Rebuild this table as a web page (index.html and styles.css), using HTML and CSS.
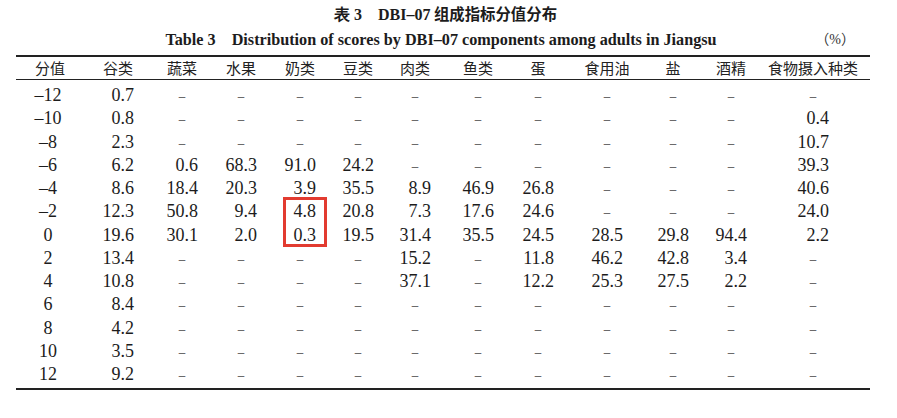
FILE: index.html
```html
<!DOCTYPE html>
<html lang="zh">
<head>
<meta charset="utf-8">
<title>表3 DBI-07组成指标分值分布</title>
<link rel="stylesheet" href="styles.css">
</head>
<body>
<div class="page">
  <div class="title-cn"><span class="lat">表 3</span><span class="gap"></span><span class="lat">DBI–07</span> 组成指标分值分布</div>
  <div class="title-en-row">
    <div class="title-en">Table 3<span class="gap"></span>Distribution of scores by DBI–07 components among adults in Jiangsu</div>
    <div class="unit">（%）</div>
  </div>
  <div class="table">
    <div class="row head">
      <div class="c">分值</div><div class="c">谷类</div><div class="c">蔬菜</div><div class="c">水果</div><div class="c">奶类</div><div class="c">豆类</div><div class="c">肉类</div><div class="c">鱼类</div><div class="c">蛋</div><div class="c">食用油</div><div class="c">盐</div><div class="c">酒精</div><div class="c last">食物摄入种类</div>
    </div>
    <div class="body" id="body"></div>
    <div class="mark"></div>
  </div>
</div>
<script src="app.js"></script>
</body>
</html>
```
FILE: app.js
```js
const rows = [
  ["–12","0.7","-","-","-","-","-","-","-","-","-","-","-"],
  ["–10","0.8","-","-","-","-","-","-","-","-","-","-","0.4"],
  ["–8","2.3","-","-","-","-","-","-","-","-","-","-","10.7"],
  ["–6","6.2","0.6","68.3","91.0","24.2","-","-","-","-","-","-","39.3"],
  ["–4","8.6","18.4","20.3","3.9","35.5","8.9","46.9","26.8","-","-","-","40.6"],
  ["–2","12.3","50.8","9.4","4.8","20.8","7.3","17.6","24.6","-","-","-","24.0"],
  ["0","19.6","30.1","2.0","0.3","19.5","31.4","35.5","24.5","28.5","29.8","94.4","2.2"],
  ["2","13.4","-","-","-","-","15.2","-","11.8","46.2","42.8","3.4","-"],
  ["4","10.8","-","-","-","-","37.1","-","12.2","25.3","27.5","2.2","-"],
  ["6","8.4","-","-","-","-","-","-","-","-","-","-","-"],
  ["8","4.2","-","-","-","-","-","-","-","-","-","-","-"],
  ["10","3.5","-","-","-","-","-","-","-","-","-","-","-"],
  ["12","9.2","-","-","-","-","-","-","-","-","-","-","-"]
];
const body = document.getElementById("body");
rows.forEach(r => {
  const row = document.createElement("div");
  row.className = "row data";
  r.forEach((v, i) => {
    const cell = document.createElement("div");
    cell.className = "c" + (i === 12 ? " last" : "");
    const s = document.createElement("span");
    if (i === 0) { s.className = "score"; s.textContent = v; }
    else if (v === "-") { s.className = "dash"; s.textContent = "–"; }
    else { s.className = "num"; s.textContent = v; }
    cell.appendChild(s);
    row.appendChild(cell);
  });
  body.appendChild(row);
});
```
FILE: styles.css
```css
html, body {
  margin: 0;
  padding: 0;
  background: #ffffff;
}
.page {
  width: 897px;
  height: 418px;
  color: #1c1c1c;
  font-family: "Liberation Serif", "Noto Sans CJK SC", serif;
}
.title-cn {
  height: 29px;
  padding-top: 2px;
  box-sizing: border-box;
  text-align: center;
  font-family: "Noto Sans CJK SC", sans-serif;
  font-weight: 700;
  font-size: 15.4px;
  line-height: 22px;
  padding-right: 6px;
}
.title-cn .lat {
  font-family: "Liberation Serif", serif;
  font-weight: 700;
  font-size: 16px;
}
.gap {
  display: inline-block;
  width: 16px;
}
.title-en-row {
  position: relative;
  height: 26px;
}
.title-en {
  text-align: center;
  font-weight: 700;
  font-size: 16.2px;
  line-height: 22px;
  padding-right: 15px;
}
.unit {
  position: absolute;
  right: 42px;
  top: 0;
  font-family: "Liberation Serif", "Noto Sans CJK SC", serif;
  font-size: 14px;
  line-height: 22px;
  color: #333;
}
.table {
  position: relative;
  margin-left: 16px;
  width: 854px;
  border-top: 2px solid #222;
  border-bottom: 2px solid #222;
}
.row {
  display: grid;
  grid-template-columns: 68px 68px 60px 58px 60px 56px 58px 68px 52px 86px 46px 70px 104px;
}
.row .c {
  display: flex;
  justify-content: center;
  align-items: center;
}
.row .c.last {
  padding-right: 10px;
}
.head {
  height: 22px;
  border-bottom: 1px solid #222;
  font-family: "Noto Sans CJK SC", sans-serif;
  font-size: 15px;
  line-height: 22px;
  color: #222;
}
.body {
  padding-top: 4px;
  padding-bottom: 2px;
}
.data {
  height: 23.25px;
  font-size: 18px;
  line-height: 23px;
}
.num {
  display: inline-block;
  width: 32px;
  text-align: right;
}
.score {
  display: inline-block;
  margin-left: -4px;
}
.dash {
  display: inline-block;
  font-size: 13px;
}
.mark {
  position: absolute;
  left: 267px;
  top: 140px;
  width: 44px;
  height: 50px;
  box-sizing: border-box;
  border: 3px solid #e23b30;
}
```
